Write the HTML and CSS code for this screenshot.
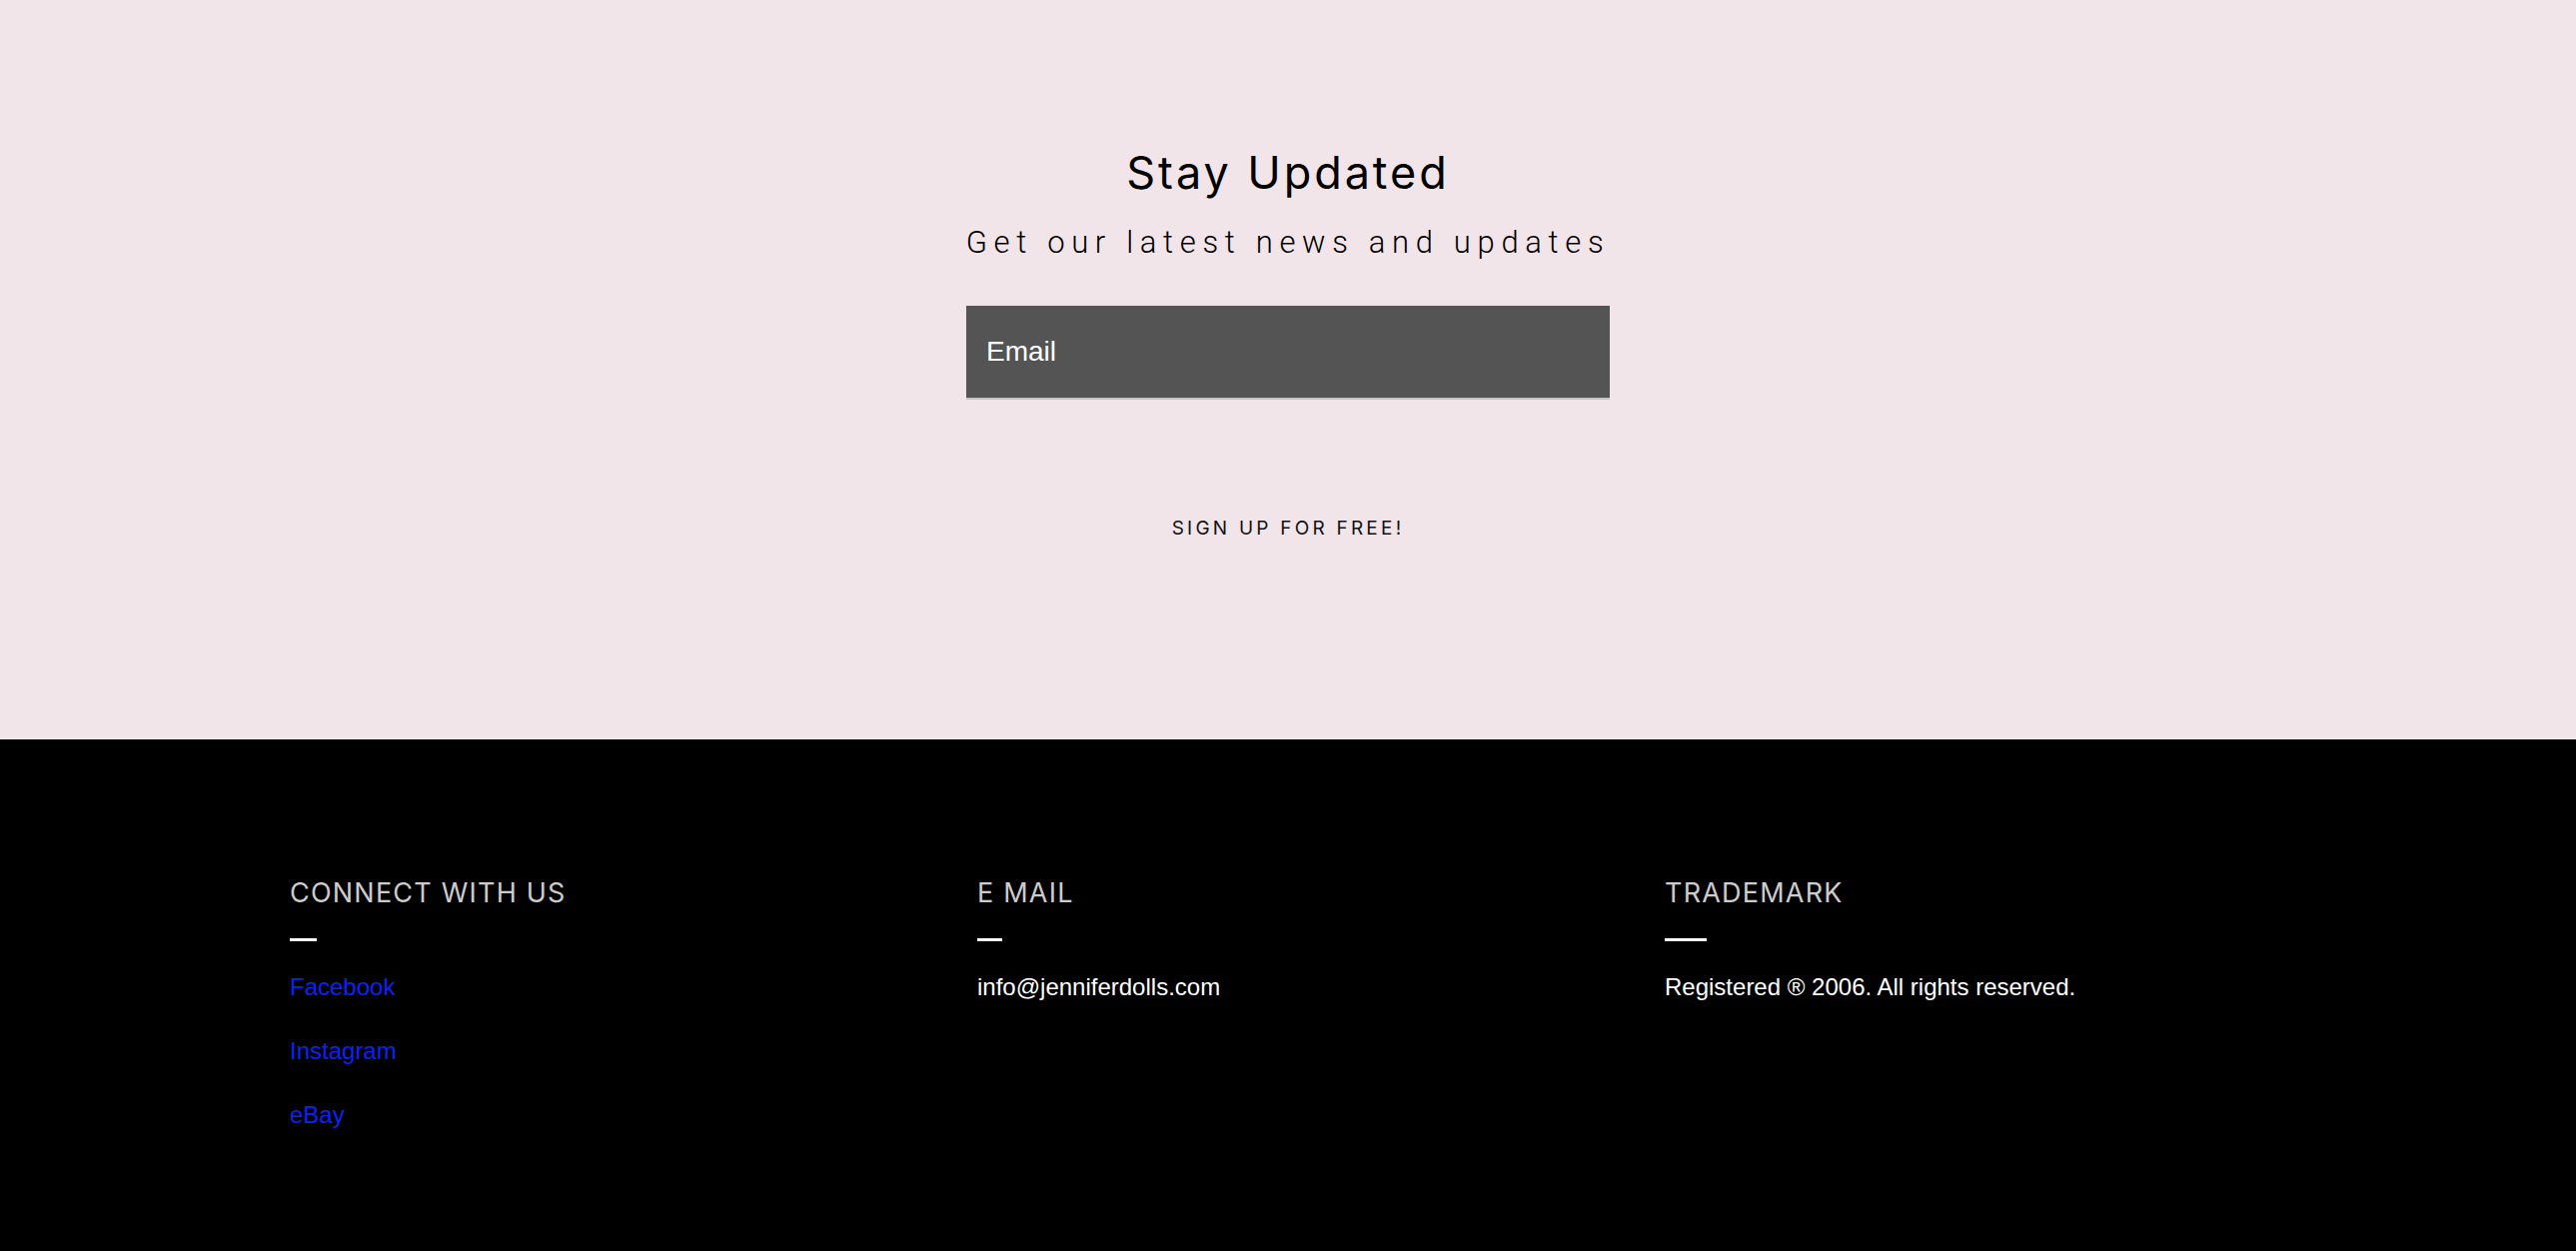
FILE: index.html
```html
<!DOCTYPE html>
<html lang="en">
<head>
<meta charset="utf-8">
<title>Stay Updated</title>
<link rel="stylesheet" href="styles.css">
</head>
<body>
<section class="signup">
  <h2 class="signup-title">Stay Updated</h2>
  <p class="signup-sub">Get our latest news and updates</p>
  <form class="signup-form">
    <input class="signup-input" type="email" placeholder="Email">
    <button class="signup-btn" type="button">SIGN UP FOR FREE!</button>
  </form>
</section>
<footer class="footer">
  <div class="footer-inner">
    <div class="footer-col">
      <h3 class="footer-head">CONNECT WITH US</h3>
      <div class="footer-dash dash-a"></div>
      <ul class="footer-links">
        <li><a href="#">Facebook</a></li>
        <li><a href="#">Instagram</a></li>
        <li><a href="#">eBay</a></li>
      </ul>
    </div>
    <div class="footer-col">
      <h3 class="footer-head">E MAIL</h3>
      <div class="footer-dash dash-b"></div>
      <p class="footer-text">info@jenniferdolls.com</p>
    </div>
    <div class="footer-col">
      <h3 class="footer-head">TRADEMARK</h3>
      <div class="footer-dash dash-c"></div>
      <p class="footer-text">Registered ® 2006. All rights reserved.</p>
    </div>
  </div>
</footer>
</body>
</html>
```
FILE: styles.css
```css
html, body {
  margin: 0;
  padding: 0;
  background: #000;
}
.signup {
  background: #f2e5e9;
  height: 740px;
  box-sizing: border-box;
  padding-top: 147px;
  display: flex;
  flex-direction: column;
  align-items: center;
}
.signup-title {
  margin: 0;
  font-family: "Inter", "Liberation Sans", sans-serif;
  font-weight: 400;
  font-size: 45px;
  line-height: 52px;
  letter-spacing: 0.065em;
  color: #000;
}
.signup-sub {
  margin: 24px 0 0;
  font-family: "Roboto", "Liberation Sans", sans-serif;
  font-weight: 300;
  font-size: 31px;
  line-height: 40px;
  letter-spacing: 0.215em;
  color: #000;
}
.signup-form {
  display: flex;
  flex-direction: column;
  align-items: center;
  margin-top: 43px;
}
.signup-input {
  width: 644px;
  height: 94px;
  box-sizing: border-box;
  border: 0;
  border-bottom: 2px solid #c4c4c4;
  background: #545454;
  padding: 0 20px;
  font-family: "Liberation Sans", Arial, sans-serif;
  font-size: 28px;
  color: #fff;
  outline: none;
}
.signup-input::placeholder {
  color: #fff;
  opacity: 1;
}
.signup-btn {
  margin-top: 117px;
  padding: 0;
  border: 0;
  background: none;
  font-family: "Inter", "Liberation Sans", sans-serif;
  font-size: 19px;
  line-height: 24px;
  letter-spacing: 0.17em;
  color: #111;
  cursor: pointer;
}
.footer {
  background: #000;
  min-height: 512px;
  box-sizing: border-box;
  padding-top: 137px;
}
.footer-inner {
  width: 1998px;
  margin: 0 auto;
  display: grid;
  grid-template-columns: 688px 688px 1fr;
}
.footer-head {
  margin: 0;
  font-family: "Inter", "Liberation Sans", sans-serif;
  font-weight: 400;
  font-size: 27px;
  line-height: 34px;
  letter-spacing: 0.045em;
  color: #cccccc;
}
.footer-dash {
  margin-top: 28px;
  height: 3px;
  background: #fff;
}
.dash-a { width: 27px; }
.dash-b { width: 25px; }
.dash-c { width: 42px; }
.footer-links {
  list-style: none;
  margin: 32px 0 0;
  padding: 0;
  display: flex;
  flex-direction: column;
  gap: 36px;
}
.footer-links a,
.footer-text {
  font-family: "Liberation Sans", Arial, sans-serif;
  font-size: 24px;
  line-height: 28px;
}
.footer-links a {
  color: #0a24f5;
  text-decoration: none;
}
.footer-text {
  margin: 32px 0 0;
  color: #fff;
}
```
